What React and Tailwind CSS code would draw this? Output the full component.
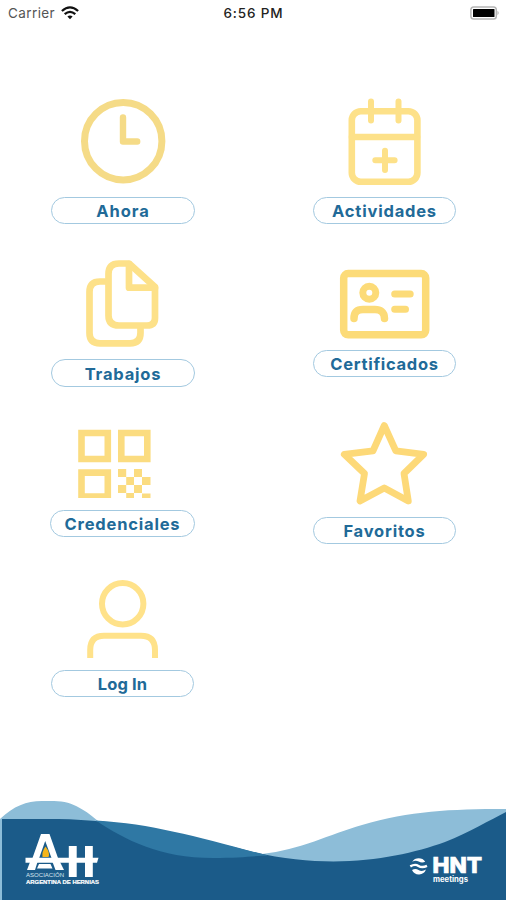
const Pill = ({ children, className }) => (
  <div
    className={`flex shrink-0 items-center justify-center whitespace-nowrap rounded-full border border-[#a3c9e0] bg-white pt-[1.5px] font-['Inter',sans-serif] text-[16.5px] leading-none font-bold text-[#216a98] ${className}`}
  >
    {children}
  </div>
);

const Icon = ({ viewBox, className, children }) => (
  <svg
    viewBox={viewBox}
    className={`block shrink-0 ${className}`}
    fill="none"
    strokeLinecap="round"
    strokeLinejoin="round"
  >
    {children}
  </svg>
);

const StatusBar = () => (
  <header className="flex h-[26px] items-center justify-between pr-[6px] pl-[8px] font-['Inter',sans-serif] text-[13.5px] leading-none text-[#222]">
    <div className="flex w-[90px] items-center gap-[5px]">
      <span className="w-[48px] pt-[1.5px] tracking-[0.4px] text-[#555]">Carrier</span>
      <svg viewBox="0 0 18 14" className="h-[14px] w-[18px]" fill="none" stroke="#111" strokeWidth="2.3">
        <path d="M0.9 5Q9 -2.2 17.1 5" />
        <path d="M3.7 8.2Q9 3.6 14.3 8.2" />
        <path d="M6.4 10.6Q9 8.3 11.6 10.6L9 13.3Z" fill="#111" stroke="none" />
      </svg>
    </div>
    <span className="pt-[1.5px] pr-[1px] font-medium tracking-[0.85px]">6:56 PM</span>
    <div className="flex w-[90px] justify-end">
      <svg viewBox="0 0 31 14" className="h-[14px] w-[31px]">
        <rect x="1.9" y="0.9" width="25.4" height="12.2" rx="2.8" fill="#fff" stroke="#b5b5b5" strokeWidth="1.5" />
        <rect x="4" y="3" width="21.5" height="8" rx="0.6" fill="#000" />
        <path d="M28.5 4.8Q30.8 7 28.5 9.2Z" fill="#aaa" />
      </svg>
    </div>
  </header>
);

const Footer = () => (
  <footer className="relative h-[110px] overflow-hidden">
    <svg viewBox="0 790 506 110" className="absolute inset-0 h-full w-full">
      <path d="M0 900V819C14 806 26 801 42 801H54C74 801 87 812 98 821V900Z" fill="#8dbdd8" />
      <path d="M262 854C300 850 330 834 362 825C410 811 450 809 506 809V870H262Z" fill="#8dbdd8" />
      <path d="M2 819H58C120 820 175 832 253 852C335 871 400 858 445 842C470 832 490 820 506 812V900H2Z" fill="#1b5b89" />
      <path d="M96 820.5C125 840 160 858 213 858C240 858 255 856 268 855.5C200 838 155 824 96 820.5Z" fill="#2f78a4" />
    </svg>
    <div className="relative flex h-full items-start justify-between pr-[20px] pl-[24px]">
      <svg viewBox="24 832 78 56" className="mt-[42px] h-[56px] w-[78px]">
        <path
          d="M32.5 858L41 834H49.5L58 858H51.5L45.2 841L39.2 858Z M30 862H37.5L35 870H27Z M52.5 862H60L64 870H55.5Z M39 864H50.5L52.5 868.5H37Z M68.8 846H76.7V877H68.8Z M85 846H92.8V877H85Z"
          fill="#fff"
        />
        <path d="M25.5 857.8H98.5L97 862.8H25.5Z" fill="#fff" />
        <path d="M45.5 846.5Q50.5 853 48.5 857H42.5Q41.5 852 45.5 846.5Z" fill="#f5b51b" />
        <text x="26" y="877.3" fontFamily="Liberation Sans, sans-serif" fontSize="5.6" fill="#d6e4ee" textLength="38" lengthAdjust="spacingAndGlyphs">
          ASOCIACIÓN
        </text>
        <text x="26" y="884" fontFamily="Liberation Sans, sans-serif" fontSize="5.6" fontWeight="700" fill="#fff" stroke="#fff" strokeWidth="0.2" textLength="73" lengthAdjust="spacingAndGlyphs">
          ARGENTINA DE HERNIAS
        </text>
      </svg>
      <svg viewBox="408 843 78 46" className="mt-[53px] h-[46px] w-[78px]">
        <path d="M412.2 861.8A7.6 7.6 0 0 1 425.2 861.8Q422 863.4 418.7 861.6Q415.5 860 412.2 861.8Z" fill="#fff" />
        <path d="M412 870Q415.5 868.2 418.5 870Q422 872 426 869.5A7.6 7.6 0 0 1 412 870Z" fill="#fff" />
        <path d="M410.3 866.4Q415 863.6 418.5 865.9T427 865.9" fill="none" stroke="#fff" strokeWidth="2.4" />
        <text x="432.5" y="872.8" fontFamily="Inter, sans-serif" fontSize="21.5" fontWeight="800" fill="#fff" stroke="#fff" strokeWidth="0.7" textLength="49.5" lengthAdjust="spacingAndGlyphs">
          HNT
        </text>
        <text x="433" y="881.5" fontFamily="Inter, sans-serif" fontSize="7.6" fontWeight="700" fill="#fff" textLength="35" lengthAdjust="spacingAndGlyphs">
          meetings
        </text>
      </svg>
    </div>
  </footer>
);

export default function App() {
  return (
    <div className="flex h-[900px] w-[506px] flex-col overflow-hidden bg-white">
      <StatusBar />
      <main className="flex flex-1 justify-between pt-[64px] pr-[50px] pl-[50px]">
        <section className="flex w-[146px] flex-col items-start">
          <Icon viewBox="50 90 146 107" className="h-[107px] w-[146px]">
            <circle cx="123.2" cy="141.2" r="38.7" stroke="#f5db87" strokeWidth="7" />
            <path d="M123 117.5V141.5H137.2" stroke="#f5db87" strokeWidth="6.4" />
          </Icon>
          <Pill className="ml-px h-[27px] w-[144px] tracking-[0.9px]">Ahora</Pill>
          <Icon viewBox="50 224 146 135" className="h-[135px] w-[146px]">
            <g stroke="#fde189" strokeWidth="6.7">
              <path d="M119 263.5H129L155 287V318Q155 325.5 147 325.5H119Q108.5 325.5 108.5 315.5V274Q108.5 263.5 119 263.5Z" />
              <path d="M129 264V287.7H155" />
              <path d="M105 281.5H100Q89.5 281.5 89.5 292V333Q89.5 343.3 100 343.3H130Q140.5 343.3 140.5 333V329" />
            </g>
          </Icon>
          <Pill className="ml-px h-[28px] w-[144px] tracking-[0.8px]">Trabajos</Pill>
          <Icon viewBox="50 387 146 123" className="h-[123px] w-[146px]">
            <g stroke="#fbdc80" strokeWidth="6.6" strokeLinejoin="miter" strokeLinecap="butt">
              <path d="M81.5 433H107.8V459H81.5Z M121.3 433H147.3V459H121.3Z M81.5 498V472.6H107.8V498 M78.2 496.6H111" />
            </g>
            <path d="M78 498H112V502H78Z" fill="#fff" />
            <path
              d="M118 469h8.2v8H118z M134 469h8v8h-8z M126.2 477h7.8v8h-7.8z M142 477h8.5v8H142z M118 485h8.2v8H118z M134 485h8v8h-8z M126.2 493h7.8v5h-7.8z M142 493.5h8.5v4.5H142z"
              fill="#fbdc80"
            />
          </Icon>
          <Pill className="h-[27px] w-[145px] tracking-[0.8px]">Credenciales</Pill>
          <Icon viewBox="50 537 146 133" className="h-[133px] w-[146px]">
            <g stroke="#ffe28a" strokeWidth="6" strokeLinecap="butt">
              <circle cx="122.7" cy="603.7" r="20.7" />
              <path d="M90.2 658V650Q90.2 635.8 104 635.8H141Q155 635.8 155 650V658" />
            </g>
          </Icon>
          <Pill className="ml-px h-[27px] w-[143px] tracking-[0.1px]">Log In</Pill>
        </section>

        <section className="flex w-[143px] flex-col items-center">
          <Icon viewBox="313 90 143 107" className="h-[107px] w-[143px]">
            <g stroke="#fde189" strokeWidth="6.6">
              <rect x="351.8" y="111.3" width="65.6" height="70.4" rx="9" />
              <path d="M352 137H417" />
              <path d="M371 101.5V120.5M398.5 101.5V120.5" strokeWidth="6" />
              <path d="M375.3 160.3H394.6M385 150.8V170" strokeWidth="6" />
            </g>
          </Icon>
          <Pill className="h-[27px] w-[143px] tracking-[0.8px]">Actividades</Pill>
          <Icon viewBox="313 224 143 126" className="h-[126px] w-[143px]">
            <g stroke="#fcdb78">
              <rect x="343.7" y="273.6" width="82" height="61.2" rx="4.5" strokeWidth="7.5" />
              <circle cx="369.3" cy="292.7" r="6.5" strokeWidth="7" />
              <path d="M354 318.5C354 311.5 358 309.5 363 309.5H375C380 309.5 384.5 311.5 384.5 318.5" strokeWidth="7.5" />
              <path d="M394.7 294H410.2M394.7 309.3H405.5" strokeWidth="7" />
            </g>
          </Icon>
          <Pill className="h-[27px] w-[143px] tracking-[0.7px]">Certificados</Pill>
          <Icon viewBox="313 377 143 140" className="h-[140px] w-[143px]">
            <path
              d="M384.3 425.5L395.8 450.8L423.7 454.3L404 473.5L408.3 501L384.3 488L360 501L364.5 473.5L344.3 454.3L373 450.8Z"
              stroke="#fdd978"
              strokeWidth="6.8"
            />
          </Icon>
          <Pill className="h-[27px] w-[143px] tracking-[0.8px]">Favoritos</Pill>
        </section>
      </main>
      <Footer />
    </div>
  );
}
